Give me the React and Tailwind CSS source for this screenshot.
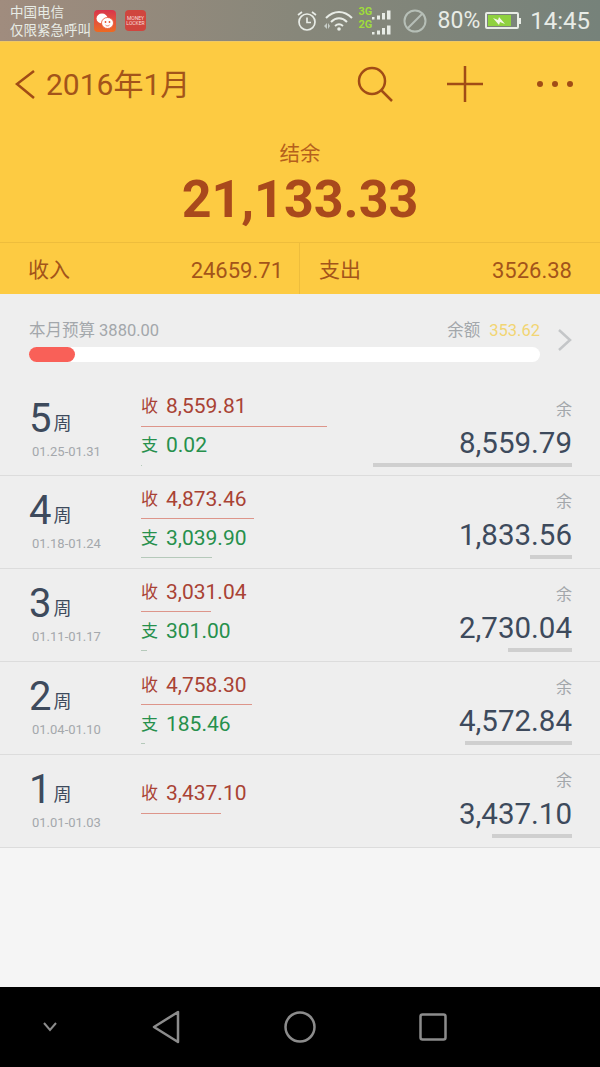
import React from "react";

const cjk = { fontFamily: 'Roboto, "Noto Sans CJK SC", sans-serif' };

const weeks = [
  { n: 5, range: "01.25-01.31", inc: "8,559.81", incW: 186, exp: "0.02", expW: 1, bal: "8,559.79", balW: 199 },
  { n: 4, range: "01.18-01.24", inc: "4,873.46", incW: 113, exp: "3,039.90", expW: 71, bal: "1,833.56", balW: 42 },
  { n: 3, range: "01.11-01.17", inc: "3,031.04", incW: 70, exp: "301.00", expW: 6, bal: "2,730.04", balW: 64 },
  { n: 2, range: "01.04-01.10", inc: "4,758.30", incW: 111, exp: "185.46", expW: 4, bal: "4,572.84", balW: 107 },
  { n: 1, range: "01.01-01.03", inc: "3,437.10", incW: 80, bal: "3,437.10", balW: 80 },
];

const StatusBar = () => (
  <div className="h-[41px] flex items-center justify-between pl-[10px] pr-[10px] bg-gradient-to-r from-[#a08c7e] via-[#87877a] to-[#76827a] text-[#e8ece6]">
    <div className="flex items-center">
      <div className="text-[13.500px] leading-[18px]">
        <div>中国电信</div>
        <div>仅限紧急呼叫</div>
      </div>
      <div className="ml-[3px] w-[22px] h-[22px] rounded-[4px] bg-gradient-to-b from-[#d8344a] to-[#ee6a20] flex items-center justify-center">
        <svg width="20" height="18" viewBox="0 0 20 18" fill="#fff">
          <ellipse cx="7" cy="6.500" rx="5.500" ry="5" />
          <ellipse cx="12.500" cy="11" rx="6" ry="5.500" stroke="#e85030" strokeWidth="0.8" />
          <circle cx="10.500" cy="10" r="0.900" fill="#e85030" />
          <circle cx="14.500" cy="10" r="0.900" fill="#e85030" />
          <path d="M10.500 13c1 1.200 3 1.200 4 0" fill="none" stroke="#e85030" strokeWidth="0.7" />
        </svg>
      </div>
      <div className="ml-[9px] w-[21px] h-[21px] rounded-[4px] bg-[#d0453e] flex flex-col items-center justify-center text-[5px] leading-[5px] text-[#f6dcd8]">
        <span>MONEY</span>
        <span>LOCKER</span>
      </div>
    </div>
    <div className="flex items-center">
      <svg width="24" height="24" viewBox="0 0 24 24" fill="none" stroke="#e8ece6" strokeWidth="1.700">
        <circle cx="12" cy="13" r="8" />
        <path d="M12 8.500V13.500H16M3 6l4-3M21 6l-4-3" />
      </svg>
      <svg className="ml-[4px]" width="30" height="22" viewBox="0 0 30 22" fill="none" stroke="#e8ece6" strokeWidth="2">
        <path d="M3 8C11 0 21 0 29 8M8 12c5-5 11-5 16 0M12 16c3-2.500 5-2.500 8 0" />
        <circle cx="16" cy="19" r="1.800" fill="#e8ece6" stroke="none" />
        <path d="M4 13l-3 3 3 3zM7 16l-2-3v6z" fill="#c6ccc6" stroke="none" />
      </svg>
      <div className="ml-[6px] w-[34px] h-[32px] relative">
        <span className="absolute left-0 top-0 text-[11px] leading-[14px] font-bold text-[#9fdc3c]">3G</span>
        <span className="absolute left-0 top-[13px] text-[11px] leading-[14px] font-bold text-[#9fdc3c]">2G</span>
        <svg className="absolute left-[13px] top-[5px]" width="20" height="26" viewBox="0 0 20 26" fill="#e8ece6">
          <path d="M0 7h2.500v2.500H0zM5 5.500h3v4H5zM10 3h3v6.500h-3zM15 0.500h3.500v9H15zM0 22h2.500v2.500H0zM5 20.500h3v4H5zM10 18h3v6.500h-3zM15 15.500h3.500v9H15z" />
        </svg>
      </div>
      <svg className="ml-[10px]" width="24" height="24" viewBox="0 0 24 24" fill="none" stroke="#b6bfb7" strokeWidth="2">
        <circle cx="12" cy="12" r="10.500" />
        <path d="M5 19L19 5" />
      </svg>
      <span className="ml-[11px] text-[23px] leading-none">80%</span>
      <div className="ml-[5px] w-[34px] h-[17px] border-2 border-[#e8ece6] rounded-[2px] p-[1px] flex">
        <div className="w-[80%] bg-[#8fd13f] flex items-center justify-center">
          <svg width="14" height="10" viewBox="0 0 14 10" fill="#f4f7e8">
            <path d="M1 2l5 2 1-3 6 7-5-2-1 3z" />
          </svg>
        </div>
      </div>
      <div className="w-[2px] h-[6px] bg-[#e8ece6]" />
      <span className="ml-[9px] text-[24px] leading-none">14:45</span>
    </div>
  </div>
);

const Header = () => (
  <div className="bg-[#fdcb42] text-[#a3541a]">
    <div className="h-[85px] flex items-center border-t border-[#f0c864]">
      <svg className="ml-[14px]" width="22" height="32" viewBox="0 0 22 32" fill="none" stroke="#a14c16" strokeWidth="2.500">
        <path d="M20 3L3 16l17 14" />
      </svg>
      <span className="ml-[10px] mt-[2px] text-[30px] leading-none">2016年1月</span>
      <svg className="ml-[166px]" width="38" height="38" viewBox="0 0 38 38" fill="none" stroke="#a14c16" strokeWidth="2.500">
        <circle cx="16" cy="16" r="13" />
        <path d="M25 25l11 11" />
      </svg>
      <svg className="ml-[52px]" width="38" height="38" viewBox="0 0 38 38" fill="none" stroke="#a14c16" strokeWidth="2.500">
        <path d="M19 1v36M1 19h36" />
      </svg>
      <div className="ml-[53px] flex gap-[9px]">
        <span className="w-[6px] h-[6px] rounded-full bg-[#a14c16]" />
        <span className="w-[6px] h-[6px] rounded-full bg-[#a14c16]" />
        <span className="w-[6px] h-[6px] rounded-full bg-[#a14c16]" />
      </div>
    </div>
    <div className="h-[116px] flex flex-col items-center">
      <div className="mt-[12px] text-[20.500px] leading-[32px] text-[#b5601c]">结余</div>
      <div className="text-[52px] leading-[60px] font-bold text-[#a9491c]">21,133.33</div>
    </div>
    <div className="h-[52px] flex items-center border-t border-[#eebd3c]">
      <div className="w-[300px] h-full flex items-center justify-between pl-[28px] pr-[16px] pt-[4px] border-r border-[#eebd3c]">
        <span className="text-[21px]">收入</span>
        <span className="text-[22px]">24659.71</span>
      </div>
      <div className="flex-1 h-full flex items-center justify-between pl-[19px] pr-[28px] pt-[4px]">
        <span className="text-[21px]">支出</span>
        <span className="text-[22px]">3526.38</span>
      </div>
    </div>
  </div>
);

const Budget = () => (
  <div className="h-[89.600px] pl-[29px] pr-[28px] pt-[25px] flex">
    <div className="w-[511px]">
      <div className="flex justify-between text-[16.500px] leading-[24px] text-[#a3a7ab]">
        <span>本月预算 3880.00</span>
        <span>
          余额<span className="ml-[9px] text-[#f2d573]">353.62</span>
        </span>
      </div>
      <div className="mt-[4px] h-[15px] rounded-full bg-white">
        <div className="w-[46px] h-full rounded-full bg-[#f96058]" />
      </div>
    </div>
    <svg className="ml-[17px] mt-[9px]" width="15" height="24" viewBox="0 0 15 24" fill="none" stroke="#c4c6c8" strokeWidth="2.500">
      <path d="M2 2l11 10L2 22" />
    </svg>
  </div>
);

const WeekRow = ({ w }) => (
  <div className="h-[92.900px] flex border-b border-[#dcdcdc] pl-[29px] pr-[28px]">
    <div className="w-[112px] pt-[11px]">
      <div className="flex items-end text-[#3d4a5c] h-[47px]">
        <span className="text-[40px] leading-[47px]">{w.n}</span>
        <span className="ml-[2px] mb-[7px] text-[18px] leading-[22px]">周</span>
      </div>
      <div className="mt-[1px] ml-[3px] text-[13px] leading-[18px] text-[#a4a8ac]">{w.range}</div>
    </div>
    <div className={w.exp ? "w-[232px] pt-[9px]" : "w-[232px] pt-[24.500px]"}>
      <div className="h-[28px] flex items-center text-[#a94234]">
        <span className="text-[17px]">收</span>
        <span className="ml-[8px] text-[21px]">{w.inc}</span>
      </div>
      <div className="mt-[5px] h-px bg-[#dd958a]" style={{ width: w.incW }} />
      {w.exp && (
        <>
          <div className="mt-[4px] h-[30px] flex items-center text-[#26904c]">
            <span className="text-[17px]">支</span>
            <span className="ml-[8px] text-[21px]">{w.exp}</span>
          </div>
          <div className="mt-[4px] h-px bg-[#b5c9ba]" style={{ width: w.expW }} />
        </>
      )}
    </div>
    <div className="flex-1 flex flex-col items-end pt-[14px]">
      <div className="text-[16px] leading-[24px] text-[#a3a7ab]">余</div>
      <div className="text-[29.500px] leading-[34px] text-[#3d4a5c] mt-[4px]">{w.bal}</div>
      <div className="mt-[3px] h-[4px] bg-[#cfcfcf]" style={{ width: w.balW }} />
    </div>
  </div>
);

const NavBar = () => (
  <div className="h-[80px] bg-black flex items-center">
    <svg className="ml-[42px]" width="16" height="12" viewBox="0 0 16 12" fill="none" stroke="#8c8c8c" strokeWidth="2">
      <path d="M2 2l6 7 6-7" />
    </svg>
    <svg className="ml-[94px]" width="28" height="34" viewBox="0 0 28 34" fill="none" stroke="#8c8c8c" strokeWidth="2.500" strokeLinejoin="round">
      <path d="M26 2v30L2 17z" />
    </svg>
    <svg className="ml-[104px]" width="32" height="32" viewBox="0 0 32 32" fill="none" stroke="#8c8c8c" strokeWidth="2.500">
      <circle cx="16" cy="16" r="14.500" />
    </svg>
    <svg className="ml-[103px]" width="28" height="28" viewBox="0 0 28 28" fill="none" stroke="#8c8c8c" strokeWidth="2.500">
      <rect x="1.500" y="1.500" width="25" height="25" rx="2" />
    </svg>
  </div>
);

export default function App() {
  return (
    <div className="w-[600px] h-[1067px] flex flex-col overflow-hidden bg-[#f5f5f5]" style={cjk}>
      <StatusBar />
      <Header />
      <div className="bg-[#eeeeee]">
        <Budget />
        {weeks.map((w) => (
          <WeekRow key={w.n} w={w} />
        ))}
      </div>
      <div className="flex-1" />
      <NavBar />
    </div>
  );
}
